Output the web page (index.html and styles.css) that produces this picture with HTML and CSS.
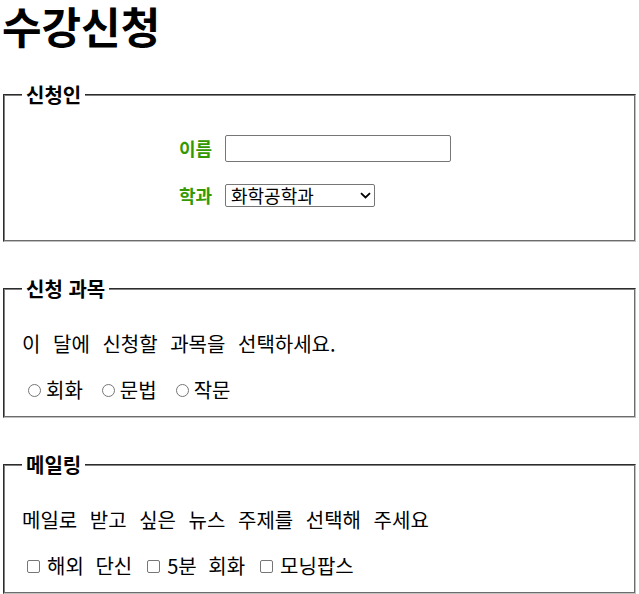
FILE: index.html
```html
<!DOCTYPE html>
<html lang="ko">
<head>
<meta charset="utf-8">
<title>수강신청</title>
<link rel="stylesheet" href="styles.css">
</head>
<body>
<h1 class="title">수강신청</h1>
<form class="form">
  <fieldset class="group group-applicant">
    <legend class="group-legend">신청인</legend>
    <div class="field-grid">
      <label class="field-label" for="name">이름</label>
      <input class="text-input" id="name" type="text">
      <label class="field-label" for="dept">학과</label>
      <select class="select" id="dept">
        <option>화학공학과</option>
      </select>
    </div>
  </fieldset>

  <fieldset class="group">
    <legend class="group-legend">신청 과목</legend>
    <p class="group-text">이 달에 신청할 과목을 선택하세요.</p>
    <div class="choice-row">
      <label class="choice"><input class="radio" type="radio" name="course">회화</label>
      <label class="choice"><input class="radio" type="radio" name="course">문법</label>
      <label class="choice"><input class="radio" type="radio" name="course">작문</label>
    </div>
  </fieldset>

  <fieldset class="group">
    <legend class="group-legend">메일링</legend>
    <p class="group-text">메일로 받고 싶은 뉴스 주제를 선택해 주세요</p>
    <div class="choice-row choice-row-check">
      <label class="choice"><input class="checkbox" type="checkbox">해외 단신</label>
      <label class="choice"><input class="checkbox" type="checkbox">5분 회화</label>
      <label class="choice"><input class="checkbox" type="checkbox">모닝팝스</label>
    </div>
  </fieldset>
</form>
</body>
</html>
```
FILE: styles.css
```css
html, body {
  margin: 0;
  padding: 0;
  background: #fff;
}
body {
  font-family: "Noto Sans CJK KR", "Noto Sans", sans-serif;
  color: #000;
}
.title {
  margin: 0;
  padding: 0 0 0 2px;
  font-family: "Liberation Sans", "Noto Sans CJK KR", sans-serif;
  font-size: 43px;
  line-height: 58px;
  font-weight: bold;
}
.form {
  padding: 0 3px;
  margin-top: 25px;
}
.group {
  margin: 0 0 35px 0;
  padding: 0 17px 12px 17px;
  border: 2px groove #c0c0c0;
  border-color: #808080 #c0c0c0 #c0c0c0 #808080;
}
.group:last-child {
  margin-bottom: 0;
}
.group-legend {
  font-size: 20px;
  font-weight: bold;
  padding: 0 4px;
  line-height: 24px;
}
.field-grid {
  display: grid;
  grid-template-columns: 190px auto;
  column-gap: 13px;
  row-gap: 20px;
  justify-items: start;
  align-items: center;
  padding-top: 28px;
  padding-bottom: 19px;
}
.field-label {
  justify-self: end;
  color: #339900;
  font-weight: bold;
  font-size: 18px;
  line-height: 27px;
}
.text-input {
  width: 226px;
  height: 27px;
  box-sizing: border-box;
  border: 1px solid #767676;
  border-radius: 2px;
  margin: 0;
  padding: 1px 2px;
}
.select {
  width: 150px;
  height: 23px;
  box-sizing: border-box;
  border: 1px solid #767676;
  border-radius: 2px;
  margin: 0;
  padding: 0 0 0 5px;
  font-family: inherit;
  font-size: 18px;
  line-height: 21px;
  color: #000;
  background: #fff url("data:image/svg+xml;utf8,<svg xmlns='http://www.w3.org/2000/svg' width='11' height='7' viewBox='0 0 11 7'><path d='M1 1.2 L5.5 5.5 L10 1.2' fill='none' stroke='black' stroke-width='1.8'/></svg>") no-repeat right 3px center;
  -webkit-appearance: none;
  appearance: none;
}
.group-text {
  margin: 0;
  padding-top: 29px;
  font-size: 20px;
  line-height: 28px;
  word-spacing: 7px;
}
.choice-row {
  display: flex;
  gap: 17px;
  padding-top: 18px;
  padding-left: 4px;
  font-size: 20px;
  line-height: 28px;
  word-spacing: 6px;
}
.choice-row-check {
  gap: 14px;
}
.choice {
  display: flex;
  align-items: center;
}
.radio,
.checkbox {
  -webkit-appearance: none;
  appearance: none;
  box-sizing: border-box;
  width: 13px;
  height: 13px;
  border: 1px solid #767676;
  background: #fff;
  flex: none;
}
.radio {
  margin: 0 5px 0 2px;
  border-radius: 50%;
}
.checkbox {
  margin: 0 7px 0 1px;
  border-radius: 2px;
}
```
